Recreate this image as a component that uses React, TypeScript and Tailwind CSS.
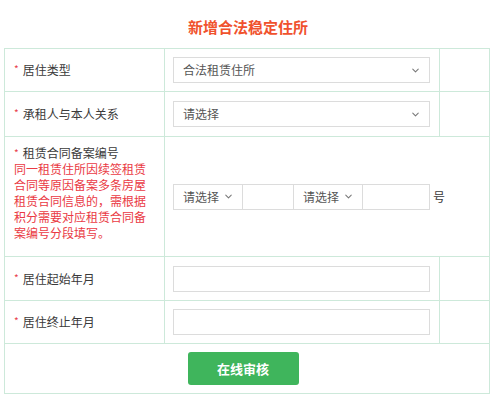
import { ChevronDown } from "lucide-react";

const Star = () => (
  <span className="mr-[4px] inline-block align-top text-[10px] leading-[16px] text-[#e8404a]">*</span>
);

const Select = ({ text, className }: { text: string; className: string }) => (
  <div
    className={`flex items-center justify-between h-[26px] border border-[#dcdcdc] bg-white pl-[9px] pr-[8px] text-[12px] text-[#555] ${className}`}
  >
    <span>{text}</span>
    <ChevronDown size={11} strokeWidth={2.2} className="text-[#777]" />
  </div>
);

const App = () => {
  const cell = "border border-[#cde9da]";

  return (
    <div
      className="w-[496px] h-[400px] bg-white"
      style={{ fontFamily: '"Noto Sans CJK SC", "Noto Sans", sans-serif' }}
    >
      <h1 className="pt-[17px] h-[48px] text-center text-[15px] font-bold text-[#f0522d] leading-[20px]">
        新增合法稳定住所
      </h1>

      <table className="ml-[4px] w-[485px] table-fixed border-collapse text-[12px] text-[#3a3a3a]">
        <colgroup>
          <col className="w-[160px]" />
          <col className="w-[275px]" />
          <col className="w-[50px]" />
        </colgroup>
        <tbody>
          {/* 居住类型 */}
          <tr className="h-[43px]">
            <td className={`${cell} pl-[9px]`}>
              <Star />
              居住类型
            </td>
            <td className={`${cell} pl-[8px]`}>
              <Select text="合法租赁住所" className="w-[257px]" />
            </td>
            <td className={cell}></td>
          </tr>

          {/* 承租人与本人关系 */}
          <tr className="h-[45px]">
            <td className={`${cell} pl-[9px]`}>
              <Star />
              承租人与本人关系
            </td>
            <td className={`${cell} pl-[8px]`}>
              <Select text="请选择" className="w-[257px]" />
            </td>
            <td className={cell}></td>
          </tr>

          {/* 租赁合同备案编号 */}
          <tr className="h-[120px]">
            <td className={`${cell} pl-[9px] pr-[8px] pt-[8px] pb-[10px] align-top leading-[16px]`}>
              <div>
                <Star />
                租赁合同备案编号
              </div>
              <div className="text-[#ea3a44]">
                同一租赁住所因续签租赁合同等原因备案多条房屋租赁合同信息的，需根据积分需要对应租赁合同备案编号分段填写。
              </div>
            </td>
            <td className={`${cell} pl-[8px]`} colSpan={2}>
              <div className="flex items-center">
                <Select text="请选择" className="w-[70px]" />
                <input className="h-[26px] w-[51px] border border-l-0 border-[#dcdcdc] outline-none" />
                <Select text="请选择" className="w-[69px] border-l-0" />
                <input className="h-[26px] w-[67px] border border-l-0 border-[#dcdcdc] outline-none" />
                <span className="ml-[3px]">号</span>
              </div>
            </td>
          </tr>

          {/* 居住起始年月 */}
          <tr className="h-[44px]">
            <td className={`${cell} pl-[9px]`}>
              <Star />
              居住起始年月
            </td>
            <td className={`${cell} pl-[8px]`}>
              <input className="block h-[26px] w-[257px] border border-[#dcdcdc] outline-none" />
            </td>
            <td className={cell}></td>
          </tr>

          {/* 居住终止年月 */}
          <tr className="h-[43px]">
            <td className={`${cell} pl-[9px]`}>
              <Star />
              居住终止年月
            </td>
            <td className={`${cell} pl-[8px]`}>
              <input className="block h-[26px] w-[257px] border border-[#dcdcdc] outline-none" />
            </td>
            <td className={cell}></td>
          </tr>

          {/* Submit */}
          <tr className="h-[50px]">
            <td className={`${cell} pr-[8px]`} colSpan={3}>
              <button className="mx-auto block h-[33px] w-[111px] rounded-[3px] bg-[#3fb55c] text-[13px] font-bold text-white">
                在线审核
              </button>
            </td>
          </tr>
        </tbody>
      </table>
    </div>
  );
};

export default App;
